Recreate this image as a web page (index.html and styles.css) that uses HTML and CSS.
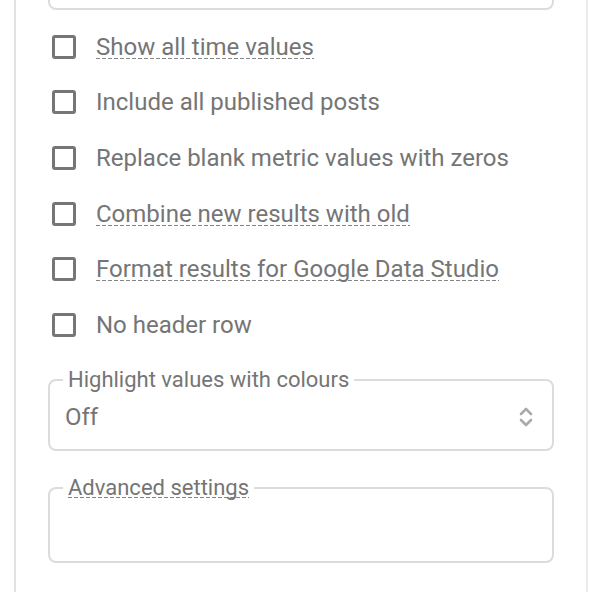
FILE: index.html
```html
<!DOCTYPE html>
<html lang="en">
<head>
    <meta charset="UTF-8">
    <title>Export settings</title>
    <link rel="stylesheet" href="styles.css">
</head>
<body>

<div class="panel">
    <div class="prev-box"></div>

    <div class="options">
        <label class="option"><span class="box"></span><span class="hint">Show all time values</span></label>
        <label class="option"><span class="box"></span><span>Include all published posts</span></label>
        <label class="option"><span class="box"></span><span>Replace blank metric values with zeros</span></label>
        <label class="option"><span class="box"></span><span class="hint">Combine new results with old</span></label>
        <label class="option"><span class="box"></span><span class="hint">Format results for Google Data Studio</span></label>
        <label class="option"><span class="box"></span><span>No header row</span></label>
    </div>

    <fieldset class="field">
        <legend>Highlight values with colours</legend>
        <div class="select">
            <span>Off</span>
            <svg class="arrows" width="16" height="24" viewBox="0 0 16 24">
                <path d="M3 9 L8 4 L13 9" fill="none" stroke="#aaa" stroke-width="2.6" stroke-linecap="round" stroke-linejoin="round"/>
                <path d="M3 15 L8 20 L13 15" fill="none" stroke="#aaa" stroke-width="2.6" stroke-linecap="round" stroke-linejoin="round"/>
            </svg>
        </div>
    </fieldset>

    <fieldset class="field advanced">
        <legend><span class="hint">Advanced settings</span></legend>
        <div class="area"></div>
    </fieldset>
</div>

</body>
</html>
```

FILE: styles.css
```css
body {
    margin: 0;
    font-family: Roboto, "Liberation Sans", sans-serif;
    color: #757575;
    background: #fff;
    overflow: hidden;
}

.panel {
    display: flow-root; /* damit der negative Rand nicht nach außen durchschlägt */
    margin-left: 14px;
    width: 574px;
    height: 600px;
    border-left: 2px solid #e2e2e2;
    border-right: 2px solid #ececec;
    padding: 0 32px;
    box-sizing: border-box;
}

/* Rest vom vorherigen Feld, oben abgeschnitten */
.prev-box {
    height: 40px;
    margin-top: -34px;
    border: 2px solid #dcdcdc;
    border-radius: 8px;
}

.options {
    display: flex;
    flex-direction: column;
    margin-top: 9px;
}

.option {
    display: flex;
    align-items: center;
    height: 55.6px;
    font-size: 24px;
}

.box {
    width: 18px;
    height: 18px;
    border: 3px solid #767676;
    border-radius: 3px;
    margin-left: 4px;
    margin-right: 20px;
    flex-shrink: 0;
}

/* gestrichelte Linie unter Einträgen mit Tooltip */
.hint {
    background-image: repeating-linear-gradient(to right, #858585 0 4px, transparent 4px 6px);
    background-size: 100% 1px;
    background-position: left calc(100% - 2px);
    background-repeat: no-repeat;
}

.field {
    margin: 14px 0 0 0;
    border: 2px solid #dcdcdc;
    border-radius: 8px;
    padding: 0 16px 0 13px;
}

.field legend {
    font-size: 22px;
    padding: 0 5px;
    line-height: 26px;
}

.select {
    display: flex;
    align-items: center;
    justify-content: space-between;
    height: 60px;
    margin-top: -4px;
    padding-bottom: 4px;
    box-sizing: border-box;
    font-size: 24px;
}

.select span {
    margin-left: 2px;
}

.arrows {
    margin-right: 2px;
}

.advanced {
    margin-top: 24px;
}

.area {
    height: 60px;
}
```
